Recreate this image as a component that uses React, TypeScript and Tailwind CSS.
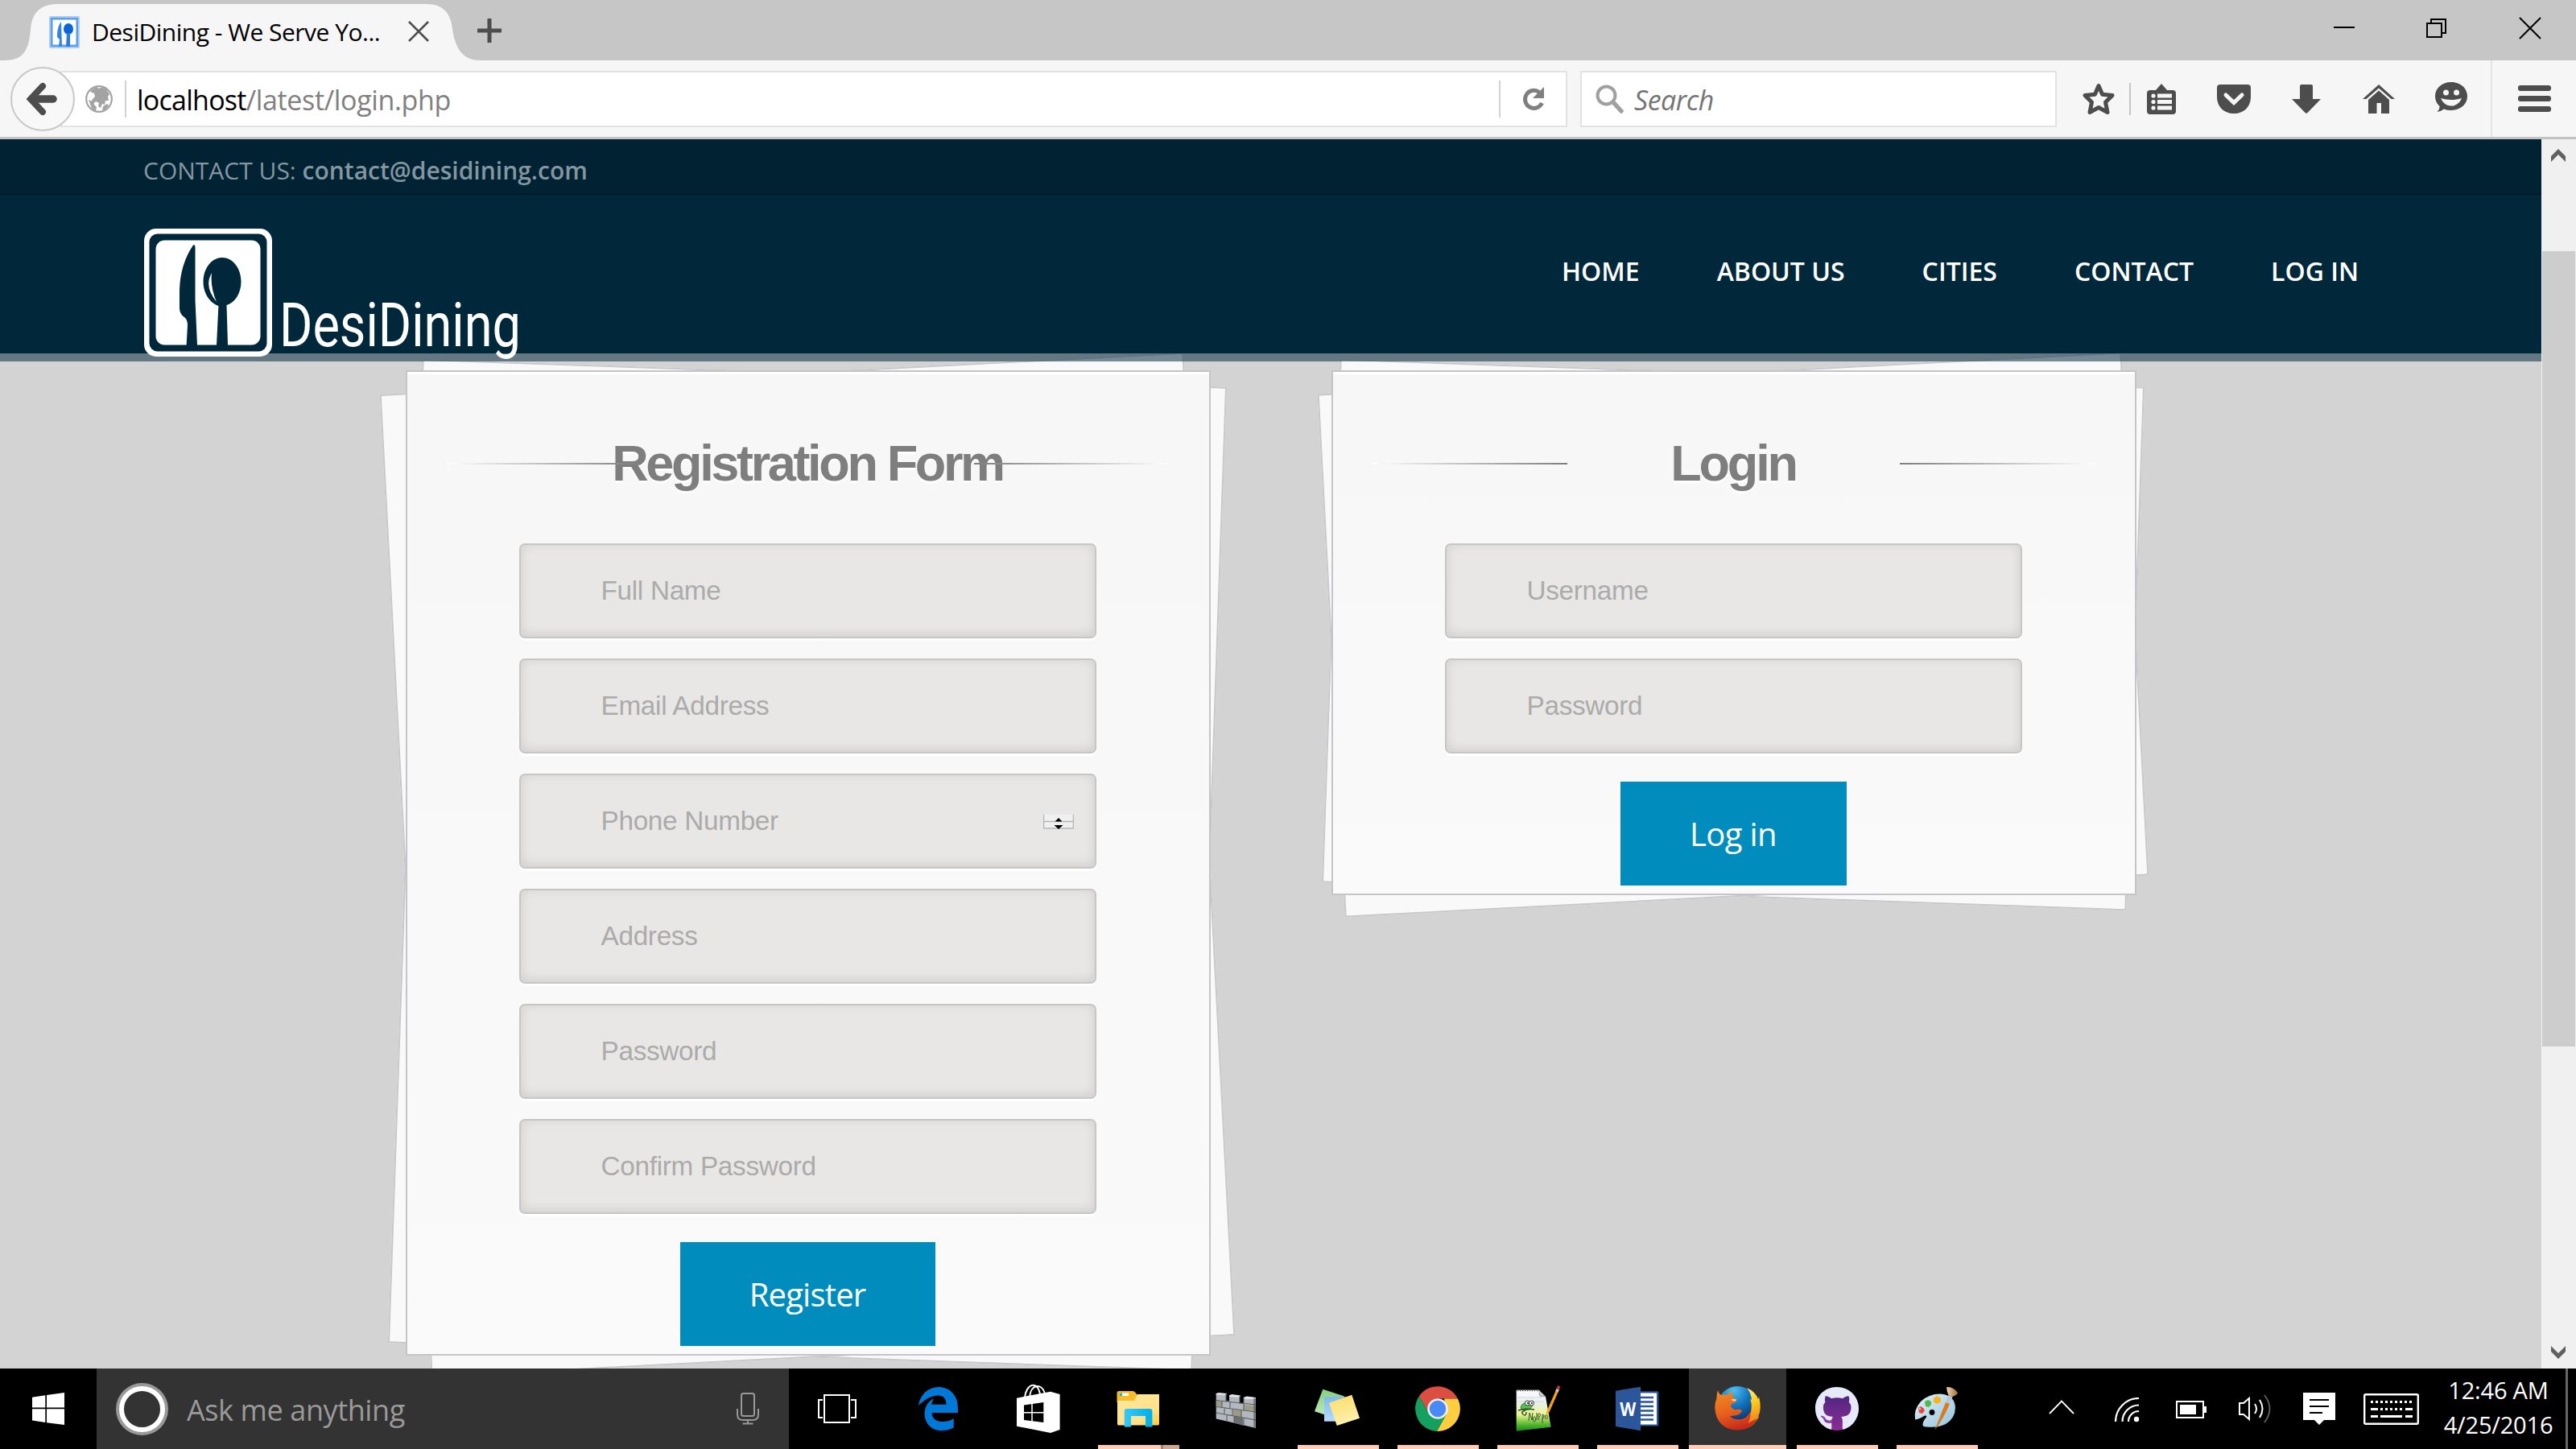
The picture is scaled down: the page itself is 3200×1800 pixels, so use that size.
import type { ReactNode } from "react";
import { FaGithub } from "react-icons/fa";

const OPEN = "font-['Open_Sans',sans-serif]";

function ToolbarSlot({ children }: { children: ReactNode }) {
  return <div className="flex w-[90px] shrink-0 items-center justify-center">{children}</div>;
}

function Favicon() {
  return (
    <svg width="38" height="40" viewBox="0 0 38 40">
      <rect width="38" height="40" rx="2" fill="#a9cdf5" />
      <rect x="2" y="2" width="34" height="36" fill="#5b9fe9" />
      <rect x="4.500" y="4.500" width="29" height="31" fill="#ffffff" />
      <path d="M15 7C11 12 10 19 10 26l3 3-1 9h4z" fill="#3384e0" />
      <ellipse cx="24" cy="16" rx="6" ry="7" fill="#0a66d6" />
      <path d="M22 21h4v17h-5z" fill="#2a7ddf" />
    </svg>
  );
}

function TabStrip() {
  return (
    <div className="flex h-[75px] shrink-0 items-stretch bg-[#c6c6c6]">
      <div className="relative ml-[6px] flex h-[75px] w-[592px] items-center">
        <svg className="absolute inset-0" width="592" height="75" viewBox="0 0 592 75">
          <path d="M0 75C26 75 30 58 32 36C34 14 46 5 66 5H524C544 5 554 16 556 36C559 58 568 75 590 75Z" fill="#f6f6f6" />
        </svg>
        <div className="relative ml-[55px] mt-[4px]"><Favicon /></div>
        <div className={`${OPEN} relative ml-[15px] mt-[5px] w-[393px] whitespace-nowrap text-[30px] leading-[40px] tracking-[-0.5px] text-black`}>
          DesiDining - We Serve Yo...
        </div>
        <svg className="relative mt-[2px]" width="26" height="26" viewBox="0 0 26 26" stroke="#4d4d4d" strokeWidth="2.6">
          <path d="M1 1L25 25M25 1L1 25" />
        </svg>
      </div>
      <svg className="ml-[-5px] mt-[23px]" width="30" height="30" viewBox="0 0 30 30" stroke="#4d4d4d" strokeWidth="5">
        <path d="M15 0V30M0 15H30" />
      </svg>
      <div className="ml-auto flex gap-[90px] pr-[43px] pt-[21px]">
        <svg className="mr-[-1px]" width="26" height="28" viewBox="0 0 26 28"><path d="M0 13H26" stroke="#000" strokeWidth="2" /></svg>
        <svg className="mr-[-1px]" width="26" height="28" viewBox="0 0 26 28" fill="none" stroke="#000" strokeWidth="2">
          <path d="M1 8H19V25H1ZM6 8V3H24V20H19" />
        </svg>
        <svg width="28" height="28" viewBox="0 0 28 28" stroke="#000" strokeWidth="2">
          <path d="M1 1L27 27M27 1L1 27" />
        </svg>
      </div>
    </div>
  );
}

function Toolbar() {
  return (
    <div className="flex h-[98px] shrink-0 items-center border-b-[3px] border-[#c2c2c2] bg-[#f6f6f6] pl-[13px]">
      <div className="relative z-10 flex size-[80px] shrink-0 items-center justify-center rounded-full border-2 border-[#c8c8c8] bg-[#f8f8f8]">
        <svg className="ml-[-2px]" width="40" height="42" viewBox="0 0 40 42" fill="none" stroke="#4d4d4d">
          <path d="M21 5L6 21L21 37" strokeWidth="8" strokeLinejoin="miter" strokeLinecap="round" />
          <path d="M8 21H34" strokeWidth="9.5" strokeLinecap="round" />
        </svg>
      </div>
      <div className="ml-[-18px] flex h-[70px] w-[1872px] shrink-0 items-center border-2 border-[#e2e2e2] bg-white">
        <svg className="ml-[29px]" width="34" height="36" viewBox="0 0 34 36">
          <circle cx="17" cy="18" r="15.8" fill="#fff" stroke="#a3a3a3" strokeWidth="2.2" />
          <path d="M10 5l4-2 3 2 4-2 5 3 4 6-2 3 1 5-4 0-1 5-3-1-2 5-3-2 1-4-4-2-3 3-3-1 2-5 3-3-1-4-3-1-2-2zM4 19l5 2 2 4 3 3-1 5-5-3zM22 27l5-3 2 2-4 5-4 1z" fill="#a3a3a3" />
        </svg>
        <div className="ml-[15px] h-[46px] w-[2px] bg-[#d2d2d2]" />
        <div className={`${OPEN} ml-[13px] mt-[2px] whitespace-nowrap text-[34px] leading-[44px]`}>
          <span className="tracking-[-0.75px] text-black">localhost</span>
          <span className="tracking-[-0.35px] text-[#808080]">/latest/login.php</span>
        </div>
        <div className="ml-auto h-[46px] w-[2px] bg-[#d2d2d2]" />
        <div className="flex w-[81px] items-center justify-center">
          <svg width="30" height="32" viewBox="0 0 30 32">
            <path d="M25.500 21A11 11 0 1 1 22 7.500" fill="none" stroke="#7f7f7f" strokeWidth="5" />
            <path d="M28 1V15H14Z" fill="#7f7f7f" />
          </svg>
        </div>
      </div>
      <div className="ml-[16px] flex h-[70px] w-[592px] shrink-0 items-center border-2 border-[#e2e2e2] bg-white">
        <svg className="ml-[17px]" width="35" height="36" viewBox="0 0 35 36" fill="none" stroke="#a0a0a0">
          <circle cx="13.500" cy="13.500" r="11" strokeWidth="4" />
          <path d="M22 22L32 33" strokeWidth="5.500" strokeLinecap="round" />
        </svg>
        <div className={`${OPEN} ml-[13px] mt-[2px] text-[34px] italic leading-[44px] tracking-[-0.5px] text-[#757575]`}>Search</div>
      </div>
      <div className="ml-[13px] flex w-[77px] shrink-0 items-center justify-center">
        <svg width="44" height="44" viewBox="0 0 44 44">
          <path d="M22 5.500L26.600 16.200L39 17.500L30.500 26L33 38.500L22 32.500L11 38.500L13.500 26L5 17.500L17.400 16.200Z" fill="none" stroke="#4d4d4d" strokeWidth="5" strokeLinejoin="round" />
        </svg>
      </div>
      <div className="h-[40px] w-[2px] shrink-0 bg-[#c6c6c6]" />
      <div className="flex w-[83px] shrink-0 items-center justify-center pr-[7px]">
        <svg width="36" height="38" viewBox="0 0 36 38" fill="#4d4d4d">
          <path d="M11 8L18 0L25 8H32Q36 8 36 12V34Q36 38 32 38H4Q0 38 0 34V12Q0 8 4 8Z" />
          <g fill="#f6f6f6">
            <circle cx="8" cy="15" r="2.600" /><circle cx="8" cy="22.500" r="2.600" /><circle cx="8" cy="30" r="2.600" />
            <path d="M13 12.500h18v5H13zM13 20h18v5H13zM13 27.500h18v5H13z" />
          </g>
        </svg>
      </div>
      <ToolbarSlot>
        <svg width="42" height="36" viewBox="0 0 42 36">
          <path d="M4 0H38Q42 0 42 4V15C42 28 33 36 21 36S0 28 0 15V4Q0 0 4 0Z" fill="#4d4d4d" />
          <path d="M11 13L21 22.500L31 13" fill="none" stroke="#f6f6f6" strokeWidth="5" strokeLinecap="round" />
        </svg>
      </ToolbarSlot>
      <ToolbarSlot>
        <svg width="36" height="36" viewBox="0 0 36 36">
          <path d="M12 0H24Q26 0 26 2V18H36L19.500 35Q18 36.500 16.500 35L0 18H10V2Q10 0 12 0Z" fill="#4d4d4d" />
        </svg>
      </ToolbarSlot>
      <ToolbarSlot>
        <svg width="40" height="36" viewBox="0 0 40 36" fill="#4d4d4d">
          <path d="M20 0L40 18H35.500L20 4.500L4.500 18H0Z" />
          <path d="M20 7.500L33 19V36H23V23H17.500V36H7V19Z" />
        </svg>
      </ToolbarSlot>
      <ToolbarSlot>
        <svg className="mt-[-3px]" width="42" height="40" viewBox="0 0 42 40">
          <path d="M21 1C33 1 41 9 41 18.500S33 36 21 36Q16 36 12 34.500Q8 37.500 3.500 38Q7 34.500 6.500 31Q1 26 1 18.500C1 9 9 1 21 1Z" fill="#4d4d4d" />
          <g fill="#f6f6f6">
            <circle cx="14.500" cy="14" r="3.500" /><circle cx="27.500" cy="14" r="3.500" />
            <path d="M8 21Q21 25 34 21Q30 30.500 21 30.500T8 21Z" />
          </g>
        </svg>
      </ToolbarSlot>
      <div className="ml-[4px] h-[95px] w-[2px] shrink-0 bg-[#e4e4e4]" />
      <div className="flex w-[104px] shrink-0 flex-col items-center gap-[6px]">
        <div className="h-[7px] w-[41px] rounded-[3px] bg-[#4d4d4d]" />
        <div className="h-[7px] w-[41px] rounded-[3px] bg-[#4d4d4d]" />
        <div className="h-[7px] w-[41px] rounded-[3px] bg-[#4d4d4d]" />
      </div>
    </div>
  );
}

function Logo() {
  return (
    <div className="flex h-[159px] items-start">
      <svg width="159" height="159" viewBox="0 0 159 159">
        <rect width="159" height="159" rx="15" fill="#fff" />
        <rect x="6.500" y="6.500" width="146" height="146" rx="10" fill="#00283a" />
        <rect x="14.500" y="14.500" width="130" height="130" rx="11" fill="#fff" />
        <g fill="#00283a">
          <path d="M61 20.500Q63.500 19 63.500 24V89L66 145H52.600L54 120Q54 113 50 110Q44 106 44 99V76Q45 44 61 20.500Z" />
          <path d="M97 36C110 36 120.500 49 120.500 66C120.500 80 113 92 102.500 95L104 145H90L92.400 96C81 92 73.500 80 73.500 66C73.500 49 84 36 97 36Z" />
        </g>
        <path d="M84 55Q74 72 90 91Q82 72 84 55Z" fill="#fff" />
      </svg>
      <div className="ml-[9px] mt-[82px] w-[300px] origin-left scale-x-[0.83] whitespace-nowrap font-[Roboto,sans-serif] text-[76px] leading-[76px] text-white">
        DesiDining
      </div>
    </div>
  );
}

function SiteHeader() {
  return (
    <header className={`${OPEN} relative z-10`}>
      <div className="h-[69px] border-b-2 border-[#001a26] bg-[#002233] pl-[178px] pt-[19px] text-[30px] leading-[40px] text-[#8496a0]">
        CONTACT US: <span className="font-semibold">contact@desidining.com</span>
      </div>
      <div className="flex h-[197px] items-start justify-between bg-[#00283a] pl-[179px] pr-[227px]">
        <div className="pt-[42px]"><Logo /></div>
        <nav className="flex gap-[96px] whitespace-nowrap pt-[75px] text-[32px] font-semibold leading-[40px] text-white">
          <span>HOME</span><span>ABOUT US</span><span>CITIES</span><span>CONTACT</span><span>LOG IN</span>
        </nav>
      </div>
      <div className="relative -z-10 h-[10px] bg-[#00283a]/53" />
    </header>
  );
}

function Field({ label, spinner }: { label: string; spinner?: boolean }) {
  return (
    <div className="flex h-[118px] w-[717px] items-center rounded-[7px] border-2 border-[#c6c6c6] bg-[#e9e7e5] pl-[100px] pr-[26px] font-['Liberation_Sans',Arial,sans-serif] text-[33.3px] leading-[40px] tracking-[-0.3px] text-[#ababab] shadow-[0_3px_0_#ffffff,inset_0_0_16px_rgba(0,0,0,0.05),inset_0_-4px_14px_rgba(0,0,0,0.06)]">
      {label}
      {spinner && (
        <svg className="ml-auto mt-[2px]" width="38" height="18" viewBox="0 0 38 18">
          <rect width="38" height="18" fill="#f0f0f0" />
          <path d="M0.500 0V17M37.500 0V17M0 8.500H38M0 17H38" stroke="#b5b5b5" strokeWidth="1.500" fill="none" />
          <path d="M19 4L23.500 8.500H14.500ZM19 18L13.500 13H24.500Z" fill="#000" />
        </svg>
      )}
    </div>
  );
}

function PaperCard({ title, titleClass, fields, button, buttonClass }: {
  title: string; titleClass: string; fields: string[]; button: string; buttonClass: string;
}) {
  return (
    <section className="relative isolate w-[1000px]">
      <div className="absolute left-[-1px] right-[1px] top-[3px] bottom-[-2px] -z-10 rotate-2 border-2 border-[#c7c7cc] bg-[#f9f9f9]" />
      <div className="absolute left-[-1px] right-[1px] top-[3px] bottom-[-2px] -z-10 -rotate-3 border-2 border-[#c7c7cc] bg-[#f9f9f9]" />
      <div className="flex flex-col items-center border-2 border-[#c5c5c8] bg-linear-to-b from-[#f7f7f7] to-[#fafafa] pb-[10px] pr-[2px] shadow-[inset_0_3px_0_#ffffff]">
        <div className="relative mt-[80px] flex h-[64px] w-[897px] justify-center">
          <h2 className={`${titleClass} whitespace-nowrap font-['Liberation_Sans',Arial,sans-serif] font-bold leading-[66px] text-[#7e7e7e] [text-shadow:0_3px_0_#ffffff]`}>{title}</h2>
          <div className="absolute left-0 top-[33px] h-[2px] w-[242px] bg-linear-to-r from-white to-[#7e7e7e]" />
          <div className="absolute right-0 top-[33px] h-[2px] w-[242px] bg-linear-to-l from-white to-[#7e7e7e]" />
        </div>
        <div className="mt-[69px] flex flex-col gap-[25px]">
          {fields.map((f) => <Field key={f} label={f} spinner={f === "Phone Number"} />)}
        </div>
        <div className={`${buttonClass} ${OPEN} mt-[35px] flex h-[129px] items-center justify-center bg-[#008dbd] text-[40px] leading-[56px] text-white`}>
          {button}
        </div>
      </div>
    </section>
  );
}

function Scrollbar() {
  return (
    <div className="flex w-[43px] shrink-0 flex-col items-center bg-[#f0f0f0]">
      <svg className="mt-[12px] mr-[2px]" width="18" height="16" viewBox="0 0 18 16"><path d="M9 0L18 9V16L9 7L0 16V9Z" fill="#606060" /></svg>
      <div className="mt-[111px] h-[988px] w-[41px] bg-[#cdcdcd]" />
      <svg className="mt-auto mr-[2px] mb-[12px]" width="18" height="16" viewBox="0 0 18 16"><path d="M9 16L18 7V0L9 9L0 0V7Z" fill="#606060" /></svg>
    </div>
  );
}

function TaskView() {
  return (
    <svg width="64" height="64" viewBox="0 0 64 64" fill="none" stroke="#fff" strokeWidth="2">
      <path d="M14 15H45V49H14ZM12 21H7V43H12M47 21H53V43H47" />
    </svg>
  );
}

function Edge() {
  return (
    <svg width="64" height="64" viewBox="0 0 64 64">
      <path transform="translate(6 5) scale(2.200 2.280)" d="M.481 10.004C1.420 4.530 5.300.150 12 0c4.050.077 7.370 1.950 9.350 5.500 1 1.850 1.290 3.830 1.350 6.090v2.400H7.960c.077 6.010 8.670 5.800 12.370 3.170v4.900c-2.170 1.320-7.080 2.480-10.890.970C6.210 21.800 3.900 18.380 3.910 14.960c-.100-4.370 2.160-7.270 5.390-8.770-.680.850-1.210 1.800-1.480 3.400h8.300s.480-4.950-4.640-4.950C6.630 4.830 3.150 7.700.480 10.004z" fill="#0078d7" />
    </svg>
  );
}

function Store() {
  return (
    <svg width="64" height="64" viewBox="0 0 64 64">
      <path d="M5 18.700L47 10.700L58.600 14V58L47 62L5 53.700Z" fill="#fff" />
      <path d="M14 27.500L38.300 24V49L14 46Z" fill="#000" />
      <path d="M24 24V50M12 36.800H40" stroke="#fff" strokeWidth="1.500" />
      <path d="M15 18C17 0 31 -3 34 14M21 17C23 1 36 0 40 13" fill="none" stroke="#fff" strokeWidth="2" />
    </svg>
  );
}

function Explorer() {
  return (
    <svg width="64" height="64" viewBox="0 0 64 64">
      <defs>
        <linearGradient id="folder" x1="0" y1="0" x2="1" y2="1"><stop offset="0" stopColor="#ffe79c" /><stop offset="0.700" stopColor="#ffe28a" /><stop offset="1" stopColor="#fdcb3c" /></linearGradient>
        <linearGradient id="handle" x1="0" y1="0" x2="1" y2="0"><stop offset="0" stopColor="#35c8fb" /><stop offset="1" stopColor="#00aeea" /></linearGradient>
      </defs>
      <path d="M5.500 12Q5.500 10 8 10H25Q27 10 28.500 12L31 15H58V24H5.500Z" fill="#f5bd2c" />
      <path d="M6 22H27L31 14H58V51Q58 52.500 56 52.500H8Q6 52.500 6 51Z" fill="url(#folder)" />
      <rect x="9" y="12.500" width="11" height="3.500" fill="#fff" /><rect x="9" y="12.500" width="3" height="3.500" fill="#13b5d8" />
      <path d="M14.700 54.500V35Q14.700 32 18 32H46Q49.400 32 49.400 35V54.500H41V41H23V54.500Z" fill="url(#handle)" />
    </svg>
  );
}

function Firewall() {
  return (
    <svg width="64" height="64" viewBox="0 0 64 64">
      <path d="M4.700 13L17 13.500V22L21 22.500V15L34 16V25L39 25.500V17.500L54 18V56L4.700 44.500Z" fill="#b3b7be" />
      <path d="M4.700 13L8 12L18 13L17 15L4.700 14.500ZM21 15.500L24 14L35 15.500L34 18L21 17ZM39 18L43 16.500L54 18V20L39 20Z" fill="#e2e4e8" />
      <path d="M4.700 22L12 23V30L4.700 29ZM26 33L36 34V43L26 40ZM39 27L54 29V35L39 34Z" fill="#9c9d84" />
      <path d="M27 41L38 44V53L27 49Z" fill="#6c6e74" />
      <path d="M17 13.500V23M34 16V26M4.700 21.500L54 27M4.700 29.500L54 36M4.700 37L54 46M12 22V30M22 24V32M39 18V34M15 31V39M25 32V41M36 34V44M18 40V48M27 42V50M39 44V53" stroke="#5a5d64" strokeWidth="1.100" fill="none" />
      <path d="M52.500 18.500V55.500" stroke="#33363b" strokeWidth="2.500" opacity="0.500" />
    </svg>
  );
}

function StickyNotes() {
  return (
    <svg width="64" height="64" viewBox="0 0 64 64">
      <defs>
        <linearGradient id="sg" x1="0" y1="0" x2="0" y2="1"><stop offset="0" stopColor="#82cf80" /><stop offset="1" stopColor="#c5edbd" /></linearGradient>
        <linearGradient id="sb" x1="0" y1="0" x2="0" y2="1"><stop offset="0" stopColor="#7eb8f3" /><stop offset="1" stopColor="#b7dbfb" /></linearGradient>
        <linearGradient id="sy" x1="0" y1="0" x2="0.300" y2="1"><stop offset="0" stopColor="#fbdc62" /><stop offset="1" stopColor="#fdf0b0" /></linearGradient>
      </defs>
      <path d="M13.300 7.700L40 16.500L30 44L3 35.300Z" fill="url(#sg)" />
      <path d="M15 17.300H43V47.700H15Z" fill="url(#sb)" />
      <path d="M21 24.700L49.300 14.700L59 43.700L30.700 53Z" fill="url(#sy)" />
    </svg>
  );
}

function Chrome() {
  return (
    <svg width="64" height="64" viewBox="-32 -32 64 64">
      <path d="M-23.200 -15.500A28 28 0 0 1 24.900 -12.500H0L-11 6Z" fill="#dc4e41" />
      <path d="M24.900 -12.500A28 28 0 0 1 -1 28L11 6L8 -12.500Z" fill="#ffcd40" />
      <path d="M-1 28A28 28 0 0 1 -23.200 -15.500L-10.500 6.500L0 12.500L10 8Z" fill="#14a05e" />
      <circle r="12.800" fill="#f1f1f1" /><circle r="10.300" fill="#4a8af4" />
    </svg>
  );
}

function NotepadPlus() {
  return (
    <svg width="64" height="64" viewBox="0 0 64 64">
      <defs><linearGradient id="np" x1="0" y1="0" x2="0" y2="1"><stop offset="0" stopColor="#fdfdfd" /><stop offset="0.300" stopColor="#e9eef0" /><stop offset="0.600" stopColor="#eaf58f" /><stop offset="0.850" stopColor="#4fb52c" /><stop offset="1" stopColor="#178a1c" /></linearGradient></defs>
      <path d="M5.700 8.700H33.700L42 17L48.700 54.700L5.700 59.700Z" fill="url(#np)" />
      <path d="M33.700 8.700L34.500 16L42 17Z" fill="#c9ccd0" stroke="#777" strokeWidth="0.600" />
      <path d="M7 9H33" stroke="#555" strokeWidth="2.500" strokeDasharray="1.200 1.800" />
      <path d="M7 18H38M7 23H40" stroke="#cbd3dc" strokeWidth="0.800" />
      <path d="M11 31Q12 24 19 25L26 28L22 33L14 34Z" fill="#55c44c" stroke="#27732a" strokeWidth="0.800" />
      <circle cx="19.500" cy="25" r="3" fill="#fff" stroke="#222" strokeWidth="0.900" /><circle cx="24.500" cy="25" r="3" fill="#fff" stroke="#222" strokeWidth="0.900" />
      <circle cx="20" cy="25" r="1" /><circle cx="24.800" cy="25" r="1" />
      <path d="M8 34Q16 31 28 33M17 34Q10 36 14 39T18 36" fill="none" stroke="#2b4b2c" strokeWidth="1.500" />
      <path d="M21 47L22 37L25 46L26 37M28 42a1.600 3 0 1 0 .1 0M31 37V46M34 43Q37 38 34 38T34 46M38 50V39Q42 40 38 45M42 45Q40 38 44 40V45" fill="none" stroke="#33502e" strokeWidth="1" />
      <path d="M58 6L44 38" stroke="#f0a41c" strokeWidth="3.200" /><path d="M58.800 3.800L57 8" stroke="#b7363a" strokeWidth="3.500" /><path d="M57 8L55.800 11" stroke="#c5c8cc" strokeWidth="3.500" />
    </svg>
  );
}

function Word() {
  return (
    <svg width="64" height="64" viewBox="0 0 64 64">
      <rect x="34" y="10.300" width="24.400" height="43.300" rx="1.500" fill="#2b579a" />
      <rect x="34" y="12.500" width="22" height="39" fill="#fff" />
      <path d="M34 18H52M34 23.500H52M34 29H52M34 34.500H52M34 40H52M34 45.500H52" stroke="#2b579a" strokeWidth="2.400" />
      <path d="M5 9.700L36 4.700V59.300L5 54Z" fill="#2b579a" />
      <text x="20.300" y="41" textAnchor="middle" fontFamily="Open Sans" fontWeight="700" fontSize="24" textLength="20" lengthAdjust="spacingAndGlyphs" fill="#fff">W</text>
    </svg>
  );
}

function Firefox() {
  return (
    <svg className="ml-[-2px]" width="64" height="64" viewBox="0 0 64 64">
      <defs>
        <radialGradient id="fg" cx="0.400" cy="0.100" r="0.900"><stop offset="0" stopColor="#4fc0f2" /><stop offset="0.450" stopColor="#1273bd" /><stop offset="1" stopColor="#0a1f52" /></radialGradient>
        <linearGradient id="fo" x1="0.200" y1="0" x2="0.500" y2="1"><stop offset="0" stopColor="#f08a24" /><stop offset="0.550" stopColor="#e8601c" /><stop offset="1" stopColor="#c4281a" /></linearGradient>
        <linearGradient id="fy" x1="0" y1="0" x2="0.200" y2="1"><stop offset="0" stopColor="#fff3a0" /><stop offset="0.500" stopColor="#fdc91c" /><stop offset="1" stopColor="#ee7a1c" /></linearGradient>
      </defs>
      <circle cx="32.300" cy="29" r="25" fill="url(#fg)" />
      <path d="M44 6Q55 11 58 20L59 17Q63 32 58 42L59.500 41Q54 53 44 56L30 52Q46 48 49 36Q51 26 48 20L50 21Q49 12 44 6Z" fill="url(#fy)" />
      <path d="M8.300 9Q9 14 12.500 15Q16 13.500 20 15Q23 11 26.700 10.300Q25 15 26.500 18L31.500 20Q32 23 28 24.500Q24 26 24 29Q27 34 32 33Q36 31.500 38 35Q35 40 29 40.500Q24 41 23 41Q28 46.500 37 45Q45 43 48 36Q50 43 45 50L57 44Q50 58.500 32.300 58.500Q13 58 6.500 42Q2 29 6.500 19Q6.500 12 8.300 9Z" fill="url(#fo)" />
      <path d="M25 20L31 20.500L29.500 22.500L26 22Z" fill="#f7d9c4" />
    </svg>
  );
}

function GitHubDesktop() {
  return (
    <div className="flex size-[54px] items-center justify-center rounded-full bg-linear-to-b from-[#40237a] to-[#8e2a96]">
      <FaGithub className="size-[56px] text-[#e6e9f8]" />
    </div>
  );
}

function Paint() {
  return (
    <svg width="64" height="64" viewBox="0 0 64 64">
      <defs>
        <linearGradient id="pp" x1="0" y1="0" x2="1" y2="1"><stop offset="0" stopColor="#e2f0f7" /><stop offset="1" stopColor="#94c3dd" /></linearGradient>
        <linearGradient id="pb" x1="0" y1="0" x2="1" y2="0"><stop offset="0" stopColor="#f2d6b0" /><stop offset="1" stopColor="#9b6a3c" /></linearGradient>
      </defs>
      <path d="M5 45.500Q3 33 12 23Q22 13.500 36 13.500Q54 15 55 30Q55 44 43 51Q35 55.500 20 54.500Q14 55 14.500 51Q15 47 19 42.500Q20 40 17 40.500Q10 45 5 45.500Z" fill="url(#pp)" />
      <circle cx="26" cy="36.500" r="3.400" fill="#000" />
      <path d="M9 31l3-2 3 2 2 3-3 4-4-1z" fill="#e8453a" /><circle cx="11" cy="32" r="1.200" fill="#fff" opacity="0.700" />
      <path d="M17 23l4-2 4 2 0 4-3 3-4-1z" fill="#55b748" />
      <path d="M28 19l4-3 5 3 0 4-4 3-5-2z" fill="#f8b31c" />
      <path d="M29.300 58.500L43 24L48 26Q40 45 29.300 58.500Z" fill="#dd7a1c" />
      <path d="M43 24L46.500 15L51.500 17L48 26Z" fill="#b9c6cf" />
      <path d="M46.500 15Q44 9 44.300 5Q53 4.500 58.300 12.500Q56 16 51.500 17Z" fill="url(#pb)" />
    </svg>
  );
}

function TaskItem({ children, open, active }: { children: ReactNode; open?: "single" | "stack"; active?: boolean }) {
  return (
    <div className={active ? "flex w-[124px] shrink-0 flex-col items-center bg-[#333333] bg-clip-content pr-[1px] pl-[2px]" : "flex w-[124px] shrink-0 flex-col items-center"}>
      <div className="flex h-[95px] items-center pt-[5px]">{children}</div>
      {open && (
        <div className={active ? "flex h-[5px] w-full bg-[#ffccb5]" : "flex h-[5px] w-[101px] justify-end bg-[#ffccb5]"}>
          {open === "stack" && <div className="h-[5px] w-[23px] border-l-[3px] border-[#a5806f] bg-[#cda792]" />}
        </div>
      )}
    </div>
  );
}

function Taskbar() {
  return (
    <div className="flex h-[100px] shrink-0 items-stretch bg-black">
      <div className="flex w-[120px] shrink-0 items-center justify-center">
        <svg width="40" height="40" viewBox="0 0 40 40" fill="#fff">
          <path d="M0 5.700L16.300 3.200V18.500H0ZM18 3L40 0V18.500H18ZM0 20.300H16.300V37L0 34.500ZM18 20.300H40V40L18 37.200Z" />
        </svg>
      </div>
      <div className="flex w-[860px] shrink-0 items-center bg-[#333333]">
        <div className="ml-[24px] flex size-[65px] items-center justify-center rounded-full bg-[#999999]">
          <div className="size-[57px] rounded-full border-[6px] border-white bg-[#333333]" />
        </div>
        <div className={`${OPEN} ml-[23px] mt-[3px] whitespace-nowrap text-[36px] leading-[50px] tracking-[-0.4px] text-[#9a9a9a]`}>Ask me anything</div>
        <svg className="ml-auto mr-[37px]" width="28" height="40" viewBox="0 0 28 40" fill="none" stroke="#999" strokeWidth="2">
          <rect x="6" y="1" width="16" height="28" rx="2.500" />
          <path d="M1 20V27Q1 34 8 34H20Q27 34 27 27V20M14 34V39M7.500 38.500H20.500" />
        </svg>
      </div>
      <TaskItem><TaskView /></TaskItem>
      <TaskItem><Edge /></TaskItem>
      <TaskItem><Store /></TaskItem>
      <TaskItem open="stack"><Explorer /></TaskItem>
      <TaskItem><Firewall /></TaskItem>
      <TaskItem open="single"><StickyNotes /></TaskItem>
      <TaskItem open="single"><Chrome /></TaskItem>
      <TaskItem open="single"><NotepadPlus /></TaskItem>
      <TaskItem open="single"><Word /></TaskItem>
      <TaskItem open="single" active><Firefox /></TaskItem>
      <TaskItem open="single"><GitHubDesktop /></TaskItem>
      <TaskItem open="single"><Paint /></TaskItem>
      <div className="ml-auto flex items-center">
        <svg className="mt-[-4px]" width="32" height="18" viewBox="0 0 32 18" fill="none" stroke="#fff" strokeWidth="1.800"><path d="M1 17L16 1.500L31 17" /></svg>
        <svg className="ml-[50px] mt-[2px]" width="31" height="31" viewBox="0 0 31 31" fill="none" stroke="#fff" strokeWidth="2.200">
          <path d="M1 30A29 29 0 0 1 30 1M9.500 30A20.500 20.500 0 0 1 30 9.500M17 30A13 13 0 0 1 30 17" />
          <circle cx="27" cy="27" r="3.200" fill="#fff" stroke="none" />
        </svg>
        <svg className="ml-[45px] mt-[2px]" width="38" height="22" viewBox="0 0 38 22">
          <rect x="1" y="1" width="33" height="20" fill="none" stroke="#fff" strokeWidth="2" />
          <path d="M5 5H25V17H5ZM35 7H38V15H35Z" fill="#fff" />
        </svg>
        <svg className="ml-[40px]" width="41" height="38" viewBox="0 0 41 38" fill="none" stroke="#fff" strokeWidth="2">
          <path d="M1 12H6L13 6V32L6 26H1ZM20 13Q24 19 20 25M26 8Q33 19 26 30" />
          <path d="M32 2Q45 19 32 36" stroke="#5a5a5a" />
        </svg>
        <svg className="ml-[39px]" width="40" height="40" viewBox="0 0 40 40">
          <path d="M0 0H40V34H26L20 40L14 34H0Z" fill="#fff" />
          <path d="M8 9H32M8 17H32M8 25H24" stroke="#000" strokeWidth="2" />
        </svg>
        <svg className="ml-[35px]" width="69" height="39" viewBox="0 0 69 39" fill="none" stroke="#fff">
          <rect x="1.200" y="1.200" width="66.600" height="36.600" rx="1.500" strokeWidth="2.400" />
          <path d="M9 10.500H61" strokeWidth="3" strokeDasharray="3 3" />
          <path d="M21 19.500H49" strokeWidth="3" strokeDasharray="3 3" />
          <path d="M9 19.500H18M52 19.500H61M9 28.500H18M21 28.500H48M52 28.500H61" strokeWidth="3" />
        </svg>
        <div className={`${OPEN} ml-[20px] mt-[-4px] w-[157px] whitespace-nowrap text-center text-[29px] leading-[43px] tracking-[-0.2px] text-white`}>
          <div>12:46 AM</div>
          <div>4/25/2016</div>
        </div>
        <div className="ml-[5px] mr-[10px] h-[100px] w-[3px] bg-[#666666]" />
      </div>
    </div>
  );
}

export default function App() {
  return (
    <div className="flex h-[1800px] w-[3200px] flex-col overflow-hidden bg-[#d3d3d3]">
      <TabStrip />
      <Toolbar />
      <div className="flex h-[1527px] shrink-0 overflow-hidden">
        <div className="relative isolate w-[3157px] shrink-0 overflow-hidden bg-[#d3d3d3]">
          <SiteHeader />
          <main className="flex items-start gap-[150px] pl-[504px] pt-[11px]">
            <PaperCard
              title="Registration Form"
              titleClass="text-[63px] tracking-[-3.35px]"
              fields={["Full Name", "Email Address", "Phone Number", "Address", "Password", "Confirm Password"]}
              button="Register"
              buttonClass="w-[317px] tracking-[-0.8px]"
            />
            <PaperCard
              title="Login"
              titleClass="text-[63px] tracking-[-3.2px]"
              fields={["Username", "Password"]}
              button="Log in"
              buttonClass="w-[281px] tracking-[-0.6px]"
            />
          </main>
        </div>
        <Scrollbar />
      </div>
      <Taskbar />
    </div>
  );
}
